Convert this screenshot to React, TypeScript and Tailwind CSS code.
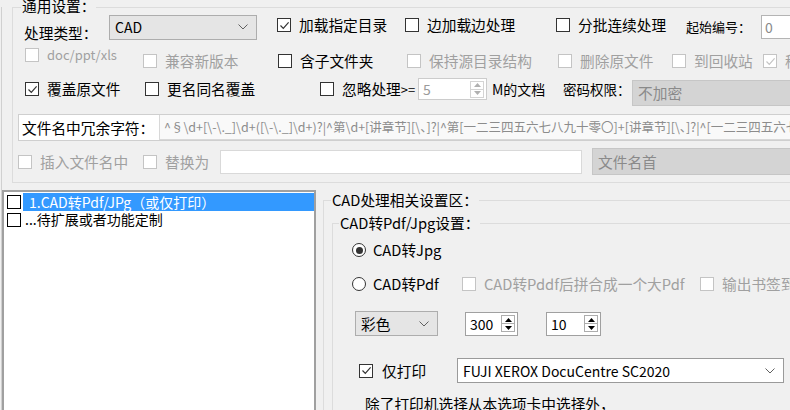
import React from "react";

// small win10-ish form controls

const Chevron = ({ light }: { light?: boolean }) => (
  <svg width="10" height="6" viewBox="0 0 10 6" className="shrink-0">
    <path d="M0.5 0.5 L5 5 L9.5 0.5" fill="none" stroke={light ? "#a6a6a6" : "#606060"} strokeWidth="1" />
  </svg>
);

const Check = ({ checked, disabled, dark }: { checked?: boolean; disabled?: boolean; dark?: boolean }) => (
  <span
    className={`flex h-[14px] w-[14px] shrink-0 items-center justify-center border bg-white ${
      disabled ? "border-[#c4c4c4]" : dark ? "border-[#000000]" : "border-[#333333]"
    }`}
  >
    {checked && (
      <svg width="11" height="11" viewBox="0 0 11 11">
        <path d="M1.5 5.5 L4.3 8.3 L9.6 2.4" fill="none" stroke={disabled ? "#c4c4c4" : "#333333"} strokeWidth="1.2" />
      </svg>
    )}
  </span>
);

const CheckItem = ({
  label,
  checked,
  disabled,
  className = "",
}: {
  label: React.ReactNode;
  checked?: boolean;
  disabled?: boolean;
  className?: string;
}) => (
  <div className={`flex shrink-0 items-center gap-[8px] whitespace-nowrap ${disabled ? "text-[#a0a0a0]" : ""} ${className}`}>
    <Check checked={checked} disabled={disabled} />
    <span>{label}</span>
  </div>
);

const Radio = ({ on }: { on?: boolean }) => (
  <span className="flex h-[14px] w-[14px] shrink-0 items-center justify-center rounded-full border border-[#333333] bg-white">
    {on && <span className="h-[7px] w-[7px] rounded-full bg-[#333333]" />}
  </span>
);

const Spin = ({ value, className = "", disabled }: { value: string; className?: string; disabled?: boolean }) => (
  <div
    className={`flex shrink-0 items-center border bg-white pl-[4px] text-[14px] ${
      disabled ? "border-[#cccccc] text-[#9a9a9a]" : "border-[#a0a0a0]"
    } ${className}`}
  >
    <span>{value}</span>
    <div className={`ml-auto mr-[2px] flex h-[17px] w-[14px] flex-col border ${disabled ? "border-[#d4d4d4]" : "border-[#adadad]"}`}>
      <div className={`flex flex-1 items-center justify-center border-b ${disabled ? "border-[#d4d4d4]" : "border-[#adadad]"}`}>
        <svg width="7" height="4" viewBox="0 0 7 4">
          <path d="M0 4 L3.5 0 L7 4Z" fill={disabled ? "#b0b0b0" : "#000000"} />
        </svg>
      </div>
      <div className="flex flex-1 items-center justify-center">
        <svg width="7" height="4" viewBox="0 0 7 4">
          <path d="M0 0 L3.5 4 L7 0Z" fill={disabled ? "#b0b0b0" : "#000000"} />
        </svg>
      </div>
    </div>
  </div>
);

const Combo = ({
  value,
  className = "",
  disabled,
  white,
}: {
  value: string;
  className?: string;
  disabled?: boolean;
  white?: boolean;
}) => (
  <div
    className={`flex shrink-0 items-center justify-between border pl-[5px] pr-[8px] ${
      disabled
        ? "border-[#c6c6c6] bg-[#d4d4d4] text-[#8a8a8a]"
        : white
        ? "border-[#9a9a9a] bg-white"
        : "border-[#adadad] bg-[#e5e5e5]"
    } ${className}`}
  >
    <span className="whitespace-nowrap">{value}</span>
    <Chevron light={disabled} />
  </div>
);

const regex =
  "^§\\d+[\\-\\._]\\d+([\\-\\._]\\d+)?|^第\\d+[讲章节][\\、]?|^第[一二三四五六七八九十零〇]+[讲章节][\\、]?|^[一二三四五六七八九十]+[\\、\\.]";

export default function App() {
  return (
    <div className="h-[410px] w-[790px] overflow-hidden bg-[#f0f0f0] font-['Noto_Sans_CJK_SC',sans-serif] text-[14.7px] leading-[20px] text-black">
      <div className="ml-[1px] h-full w-[900px] border-l border-[#d0d0d0]">
        {/* 通用设置 */}
        <div className="relative ml-[10px] mt-[7px] h-[176px] border border-[#dcdcdc]">
          <span className="absolute -top-[12px] left-[8px] bg-[#f0f0f0] px-[1px]">通用设置：</span>

          <div className="mt-[6px] flex h-[26px] items-center">
            <span className="w-[96px] shrink-0 translate-y-[6px] pl-[11px]">处理类型：</span>
            <Combo value="CAD" className="h-[25px] w-[148px] text-[14px]" />
            <CheckItem label="加载指定目录" checked className="ml-[20px] w-[128px] -translate-y-[2px]" />
            <CheckItem label="边加载边处理" className="w-[151px] -translate-y-[2px]" />
            <CheckItem label="分批连续处理" className="w-[130px] -translate-y-[2px]" />
            <span className="w-[75px] shrink-0 whitespace-nowrap text-[13px]">起始编号：</span>
            <div className="flex h-[24px] w-[60px] shrink-0 items-center border border-[#b4b4b4] bg-white pl-[3px] text-[14px] text-[#8a8a8a]">
              0
            </div>
          </div>

          <div className="mt-[8px] flex h-[26px] items-center">
            <CheckItem label="doc/ppt/xls" disabled className="w-[130px] -translate-y-[6px] pl-[12px] text-[13px]" />
            <CheckItem label="兼容新版本" disabled className="w-[135px]" />
            <CheckItem label="含子文件夹" className="w-[129px]" />
            <CheckItem label="保持源目录结构" disabled className="w-[151px]" />
            <CheckItem label="删除原文件" disabled className="w-[114px]" />
            <CheckItem label="到回收站" disabled className="w-[91px]" />
            <CheckItem label="移至回收站" checked disabled />
          </div>

          <div className="mt-[4px] flex h-[22px] items-center">
            <CheckItem label="覆盖原文件" checked className="w-[132px] pl-[12px]" />
            <CheckItem label="更名同名覆盖" className="w-[175px]" />
            <CheckItem
              label={
                <>
                  忽略处理<span className="text-[13px]">&gt;=</span>
                </>
              }
              className="w-[98px]"
            />
            <Spin value="5" disabled className="h-[22px] w-[69px]" />
            <span className="ml-[5px] w-[71px] shrink-0 whitespace-nowrap text-[14px]">M的文档</span>
            <span className="w-[69px] shrink-0 whitespace-nowrap text-[13.5px]">密码权限：</span>
            <Combo value="不加密" disabled className="h-[26px] w-[200px] translate-y-[4px]" />
          </div>

          <div className="ml-[5px] mt-[14px] flex h-[27px] border border-[#cfcfcf]">
            <div className="flex w-[140px] shrink-0 items-center whitespace-nowrap bg-white pl-[3px]">文件名中冗余字符：</div>
            <div className="flex flex-1 items-center overflow-hidden whitespace-nowrap border-b border-l border-[#d8d8d8] bg-[#f9f9f9] pl-[4px] text-[12.5px] text-[#8c8c8c]">
              {regex}
            </div>
          </div>

          <div className="mt-[7px] flex h-[27px] items-center">
            <CheckItem label="插入文件名中" disabled className="w-[130px] pl-[5px]" />
            <CheckItem label="替换为" disabled className="w-[77px]" />
            <div className="h-[24px] w-[362px] shrink-0 border border-[#d9d9d9] bg-white" />
            <Combo value="文件名首" disabled className="ml-[10px] h-[27px] w-[220px]" />
          </div>
        </div>

        {/* bottom area */}
        <div className="mt-[7px] flex h-[230px]">
          <div className="h-full w-[314px] shrink-0 border-2 border-[#a0a0a0] bg-white pt-[1px] text-[14px] leading-[17px]">
            <div className="flex h-[18px] items-center">
              <span className="ml-[3px]">
                <Check dark />
              </span>
              <div className="ml-[2px] flex h-full flex-1 items-center whitespace-nowrap bg-[#3399ff] pl-[6px] text-white">
                1.CAD转Pdf/JPg（或仅打印）
              </div>
            </div>
            <div className="flex h-[17px] items-center">
              <span className="ml-[3px]">
                <Check dark />
              </span>
              <span className="ml-[4px] whitespace-nowrap">...待扩展或者功能定制</span>
            </div>
          </div>

          <div className="relative ml-[7px] mt-[10px] h-[300px] flex-1 border border-[#dcdcdc]">
            <span className="absolute -top-[11px] left-[7px] bg-[#f0f0f0] px-[1px]">CAD处理相关设置区：</span>

            <div className="relative ml-[8px] mt-[22px] h-[260px] border border-[#dcdcdc]">
              <span className="absolute -top-[11px] left-[6px] bg-[#f0f0f0] px-[1px]">CAD转Pdf/Jpg设置：</span>

              <div className="mt-[16px] flex h-[20px] items-center gap-[7px] pl-[19px]">
                <Radio on />
                <span>CAD转Jpg</span>
              </div>

              <div className="mt-[14px] flex h-[20px] items-center pl-[19px]">
                <div className="flex w-[110px] shrink-0 items-center gap-[7px]">
                  <Radio />
                  <span>CAD转Pdf</span>
                </div>
                <CheckItem label="CAD转Pddf后拼合成一个大Pdf" disabled className="w-[238px] gap-[6px]" />
                <CheckItem label="输出书签到目录" disabled className="gap-[6px]" />
              </div>

              <div className="mt-[17px] flex h-[25px] items-center pl-[22px]">
                <Combo value="彩色" className="h-[25px] w-[83px]" />
                <Spin value="300" className="ml-[27px] h-[24px] w-[53px]" />
                <Spin value="10" className="ml-[28px] h-[24px] w-[55px]" />
              </div>

              <div className="mt-[22px] flex h-[25px] items-center">
                <CheckItem label="仅打印" checked className="w-[124px] gap-[9px] pl-[26px]" />
                <Combo value="FUJI XEROX DocuCentre SC2020" white className="h-[25px] w-[327px] text-[14px]" />
              </div>

              <div className="mt-[11px] whitespace-nowrap pl-[32px]">除了打印机选择从本选项卡中选择外，</div>
            </div>
          </div>
        </div>
      </div>
    </div>
  );
}
